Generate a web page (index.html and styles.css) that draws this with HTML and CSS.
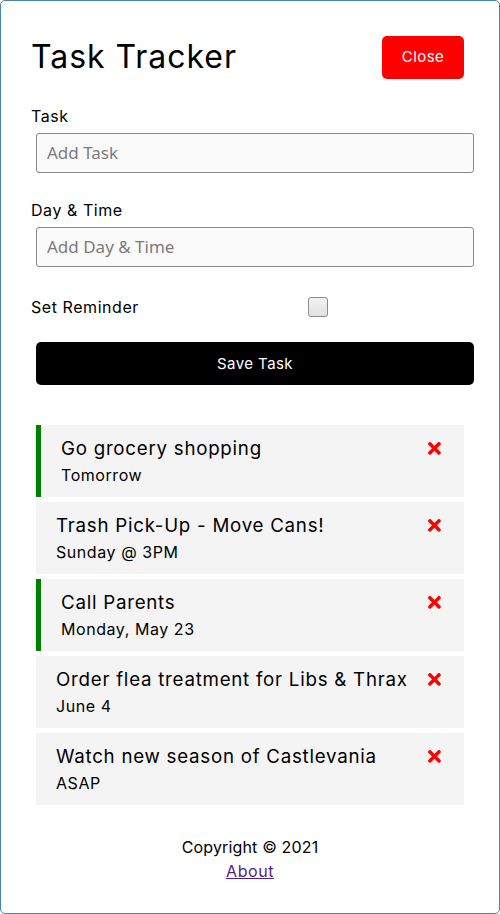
FILE: index.html
```html
<!DOCTYPE html>
<html lang="en">
<head>
<meta charset="utf-8">
<title>Task Tracker</title>
<link rel="stylesheet" href="styles.css">
</head>
<body>
<div class="container">
  <header class="header">
    <h1>Task Tracker</h1>
    <button class="btn btn-close">Close</button>
  </header>

  <form class="add-form">
    <div class="form-control">
      <label>Task</label>
      <input type="text" placeholder="Add Task">
    </div>
    <div class="form-control">
      <label>Day &amp; Time</label>
      <input type="text" placeholder="Add Day &amp; Time">
    </div>
    <div class="form-control form-control-check">
      <label>Set Reminder</label>
      <div class="check-wrap"><input type="checkbox" class="check"></div>
    </div>
    <button type="button" class="btn btn-block">Save Task</button>
  </form>

  <div class="tasks">
    <div class="task reminder">
      <h3>Go grocery shopping <svg class="times" viewBox="0 0 352 512"><path d="M242.72 256l100.07-100.07c12.28-12.28 12.28-32.19 0-44.48l-22.24-22.24c-12.28-12.28-32.19-12.28-44.48 0L176 189.28 75.93 89.21c-12.28-12.28-32.19-12.28-44.48 0L9.21 111.45c-12.28 12.28-12.28 32.19 0 44.48L109.28 256 9.21 356.07c-12.28 12.28-12.28 32.19 0 44.48l22.24 22.24c12.28 12.28 32.2 12.28 44.48 0L176 322.72l100.07 100.07c12.28 12.28 32.2 12.28 44.48 0l22.24-22.24c12.28-12.28 12.28-32.19 0-44.48L242.72 256z"/></svg></h3>
      <p>Tomorrow</p>
    </div>
    <div class="task">
      <h3>Trash Pick-Up - Move Cans! <svg class="times" viewBox="0 0 352 512"><path d="M242.72 256l100.07-100.07c12.28-12.28 12.28-32.19 0-44.48l-22.24-22.24c-12.28-12.28-32.19-12.28-44.48 0L176 189.28 75.93 89.21c-12.28-12.28-32.19-12.28-44.48 0L9.21 111.45c-12.28 12.28-12.28 32.19 0 44.48L109.28 256 9.21 356.07c-12.28 12.28-12.28 32.19 0 44.48l22.24 22.24c12.28 12.28 32.2 12.28 44.48 0L176 322.72l100.07 100.07c12.28 12.28 32.2 12.28 44.48 0l22.24-22.24c12.28-12.28 12.28-32.19 0-44.48L242.72 256z"/></svg></h3>
      <p>Sunday @ 3PM</p>
    </div>
    <div class="task reminder">
      <h3>Call Parents <svg class="times" viewBox="0 0 352 512"><path d="M242.72 256l100.07-100.07c12.28-12.28 12.28-32.19 0-44.48l-22.24-22.24c-12.28-12.28-32.19-12.28-44.48 0L176 189.28 75.93 89.21c-12.28-12.28-32.19-12.28-44.48 0L9.21 111.45c-12.28 12.28-12.28 32.19 0 44.48L109.28 256 9.21 356.07c-12.28 12.28-12.28 32.19 0 44.48l22.24 22.24c12.28 12.28 32.2 12.28 44.48 0L176 322.72l100.07 100.07c12.28 12.28 32.2 12.28 44.48 0l22.24-22.24c12.28-12.28 12.28-32.19 0-44.48L242.72 256z"/></svg></h3>
      <p>Monday, May 23</p>
    </div>
    <div class="task">
      <h3>Order flea treatment for Libs &amp; Thrax <svg class="times" viewBox="0 0 352 512"><path d="M242.72 256l100.07-100.07c12.28-12.28 12.28-32.19 0-44.48l-22.24-22.24c-12.28-12.28-32.19-12.28-44.48 0L176 189.28 75.93 89.21c-12.28-12.28-32.19-12.28-44.48 0L9.21 111.45c-12.28 12.28-12.28 32.19 0 44.48L109.28 256 9.21 356.07c-12.28 12.28-12.28 32.19 0 44.48l22.24 22.24c12.28 12.28 32.2 12.28 44.48 0L176 322.72l100.07 100.07c12.28 12.28 32.2 12.28 44.48 0l22.24-22.24c12.28-12.28 12.28-32.19 0-44.48L242.72 256z"/></svg></h3>
      <p>June 4</p>
    </div>
    <div class="task">
      <h3>Watch new season of Castlevania <svg class="times" viewBox="0 0 352 512"><path d="M242.72 256l100.07-100.07c12.28-12.28 12.28-32.19 0-44.48l-22.24-22.24c-12.28-12.28-32.19-12.28-44.48 0L176 189.28 75.93 89.21c-12.28-12.28-32.19-12.28-44.48 0L9.21 111.45c-12.28 12.28-12.28 32.19 0 44.48L109.28 256 9.21 356.07c-12.28 12.28-12.28 32.19 0 44.48l22.24 22.24c12.28 12.28 32.2 12.28 44.48 0L176 322.72l100.07 100.07c12.28 12.28 32.2 12.28 44.48 0l22.24-22.24c12.28-12.28 12.28-32.19 0-44.48L242.72 256z"/></svg></h3>
      <p>ASAP</p>
    </div>
  </div>

  <footer class="footer">
    <p class="copyright">Copyright &copy; 2021</p>
    <a href="#about" class="about-link">About</a>
  </footer>
</div>
</body>
</html>
```
FILE: styles.css
```css
* {
  box-sizing: border-box;
  margin: 0;
  padding: 0;
}

body {
  font-family: Inter, "Open Sans", sans-serif;
  font-size: 16px;
  line-height: 24px;
  letter-spacing: 0.035em;
  color: #000;
  background: #fff;
}

.container {
  width: 500px;
  min-height: 300px;
  border: 1px solid steelblue;
  border-radius: 5px;
  padding: 30px;
}

.header {
  display: flex;
  justify-content: space-between;
  align-items: center;
  margin-bottom: 20px;
}

.header h1 {
  font-size: 32px;
  line-height: 48px;
  font-weight: 400;
  letter-spacing: 0.03em;
}

.btn {
  display: inline-block;
  background: #000;
  color: #fff;
  border: none;
  padding: 10px 20px;
  margin: 5px;
  border-radius: 5px;
  font-family: inherit;
  font-size: 15px;
  line-height: 22.5px;
  letter-spacing: 0.03em;
  cursor: pointer;
}

.btn-close {
  background: red;
  width: 82px;
  padding-left: 0;
  padding-right: 0;
  text-align: center;
}

.btn-block {
  display: block;
  width: 100%;
  line-height: 23px;
}

.add-form {
  margin-bottom: 40px;
}

.form-control {
  margin: 20px 0;
}

.form-control label {
  display: block;
}

.form-control input[type="text"] {
  width: 100%;
  height: 40px;
  margin: 5px;
  padding: 3px 10px;
  font-family: "Noto Sans", "Open Sans", sans-serif;
  font-size: 17px;
  letter-spacing: 0;
  border: 1px solid #8a8a8a;
  border-radius: 3px;
  background: #fafafa;
  color: #000;
}

.form-control input::placeholder {
  color: #7a7a7a;
}

.form-control-check {
  display: flex;
  align-items: center;
  justify-content: space-between;
}

.form-control-check label {
  flex: 1;
}

.check-wrap {
  flex: 2;
  display: flex;
  justify-content: center;
}

.check {
  appearance: none;
  -webkit-appearance: none;
  display: block;
  width: 20px;
  height: 20px;
  margin: 5px 10px 5px 0;
  border: 1px solid #8c8c8c;
  border-radius: 3px;
  background: linear-gradient(to bottom, #f2f2f2, #e1e1e1);
}

.task {
  background: #f4f4f4;
  margin: 5px;
  padding: 10px 20px;
}

.task.reminder {
  border-left: 5px solid green;
}

.task h3 {
  display: flex;
  align-items: center;
  justify-content: space-between;
  font-size: 18.72px;
  line-height: 28px;
  font-weight: 400;
  letter-spacing: 0.04em;
}

.times {
  width: 12.9px;
  height: 18.72px;
  fill: red;
  margin-right: 3px;
  flex-shrink: 0;
}

.footer {
  margin-top: 30px;
  text-align: center;
}

.copyright {
  letter-spacing: 0.01em;
}

.about-link {
  color: #551a8b;
  text-decoration: underline;
}
```
